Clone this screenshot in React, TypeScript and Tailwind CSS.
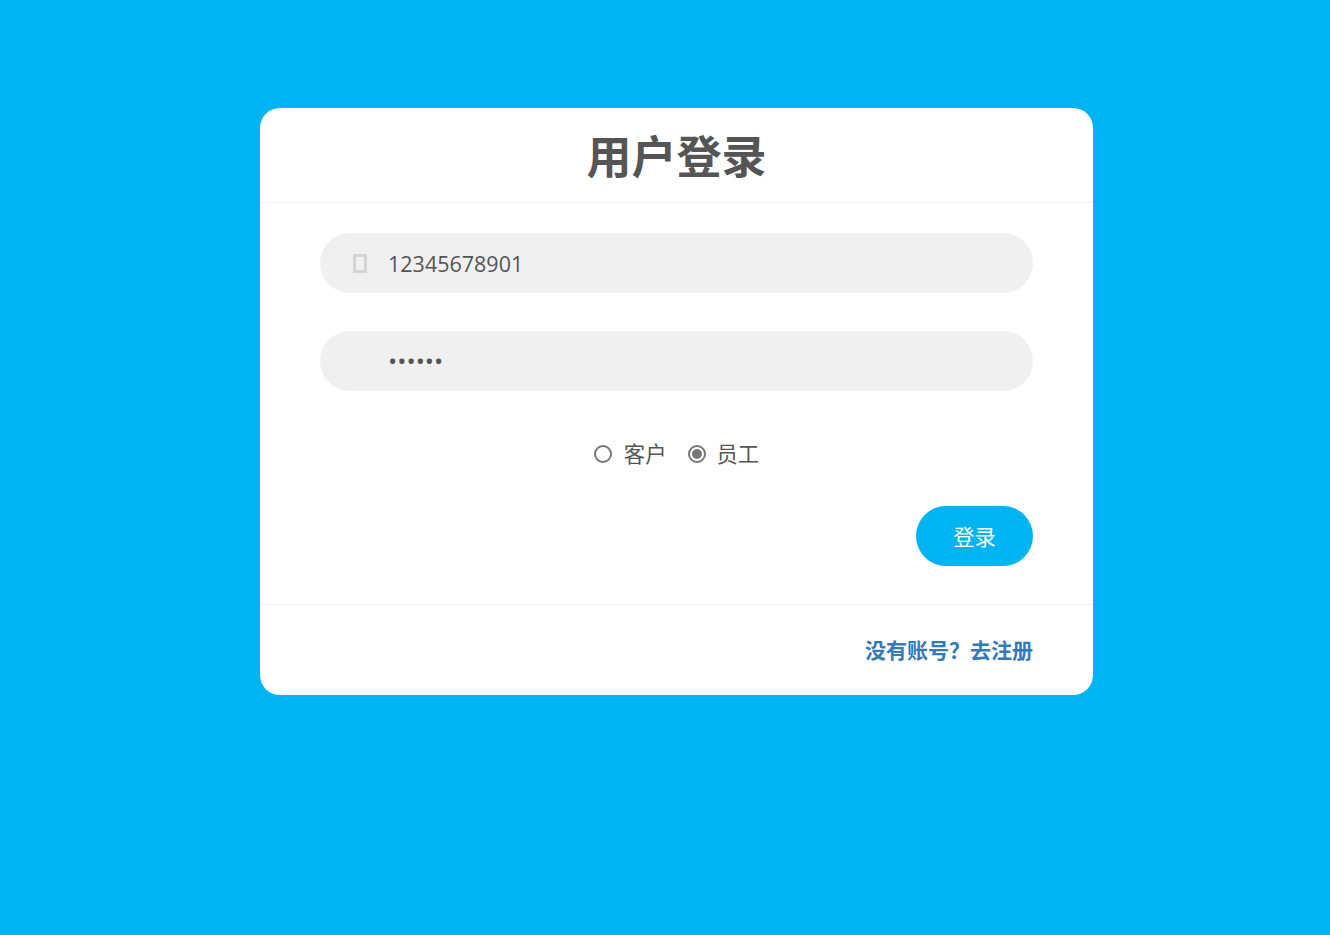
export default function App() {
  const font = { fontFamily: '"Open Sans", "Noto Sans CJK SC", sans-serif' };
  return (
    <div className="min-h-[935px] bg-[#00b4f1] pt-[108px] text-[#555555]" style={font}>
      <div className="ml-[260px] w-[833px] h-[587px] rounded-[20px] bg-white flex flex-col">
        <div className="h-[95px] shrink-0 border-b border-[#f0f0f0] flex items-center justify-center">
          <h1 className="text-[45px] leading-none font-bold text-[#555555] mt-[2px]">用户登录</h1>
        </div>
        <div className="flex flex-col px-[60px] pt-[30px] h-[402px] shrink-0 border-b border-[#f0f0f0]">
          <div className="h-[60px] rounded-[30px] bg-[#f0f0f0] flex items-center pl-[33px]">
            <span className="w-[14px] h-[19px] border-[3px] border-[#d4d4d4] shrink-0" />
            <input readOnly value="12345678901" className="ml-[21px] mt-[2px] flex-1 bg-transparent outline-none text-[21.5px] text-[#555555]" />
          </div>
          <div className="mt-[38px] h-[60px] rounded-[30px] bg-[#f0f0f0] flex items-center pl-[68px]">
            <input readOnly type="password" value="123456" className="mt-[1px] flex-1 bg-transparent outline-none text-[24.5px] text-[#555555]" />
          </div>
          <div className="mt-[50px] h-[26px] flex items-center justify-center text-[21.33px]">
            <span className="w-[18px] h-[18px] rounded-full border-2 border-[#767676] bg-white shrink-0" />
            <span className="ml-[12px]">客户</span>
            <span className="ml-[21px] w-[18px] h-[18px] rounded-full border-2 border-[#767676] bg-white shrink-0 flex items-center justify-center">
              <span className="w-[10px] h-[10px] rounded-full bg-[#767676]" />
            </span>
            <span className="ml-[11px]">员工</span>
          </div>
          <div className="mt-[39px] flex justify-end">
            <button className="w-[117px] h-[60px] rounded-[30px] bg-[#00b4f1] text-white text-[21.33px] pt-[1px]">登录</button>
          </div>
        </div>
        <div className="flex-1 flex items-center justify-end pr-[60px] pt-[2px]">
          <a className="text-[21px] font-bold text-[#337ab7]">没有账号？去注册</a>
        </div>
      </div>
    </div>
  );
}
